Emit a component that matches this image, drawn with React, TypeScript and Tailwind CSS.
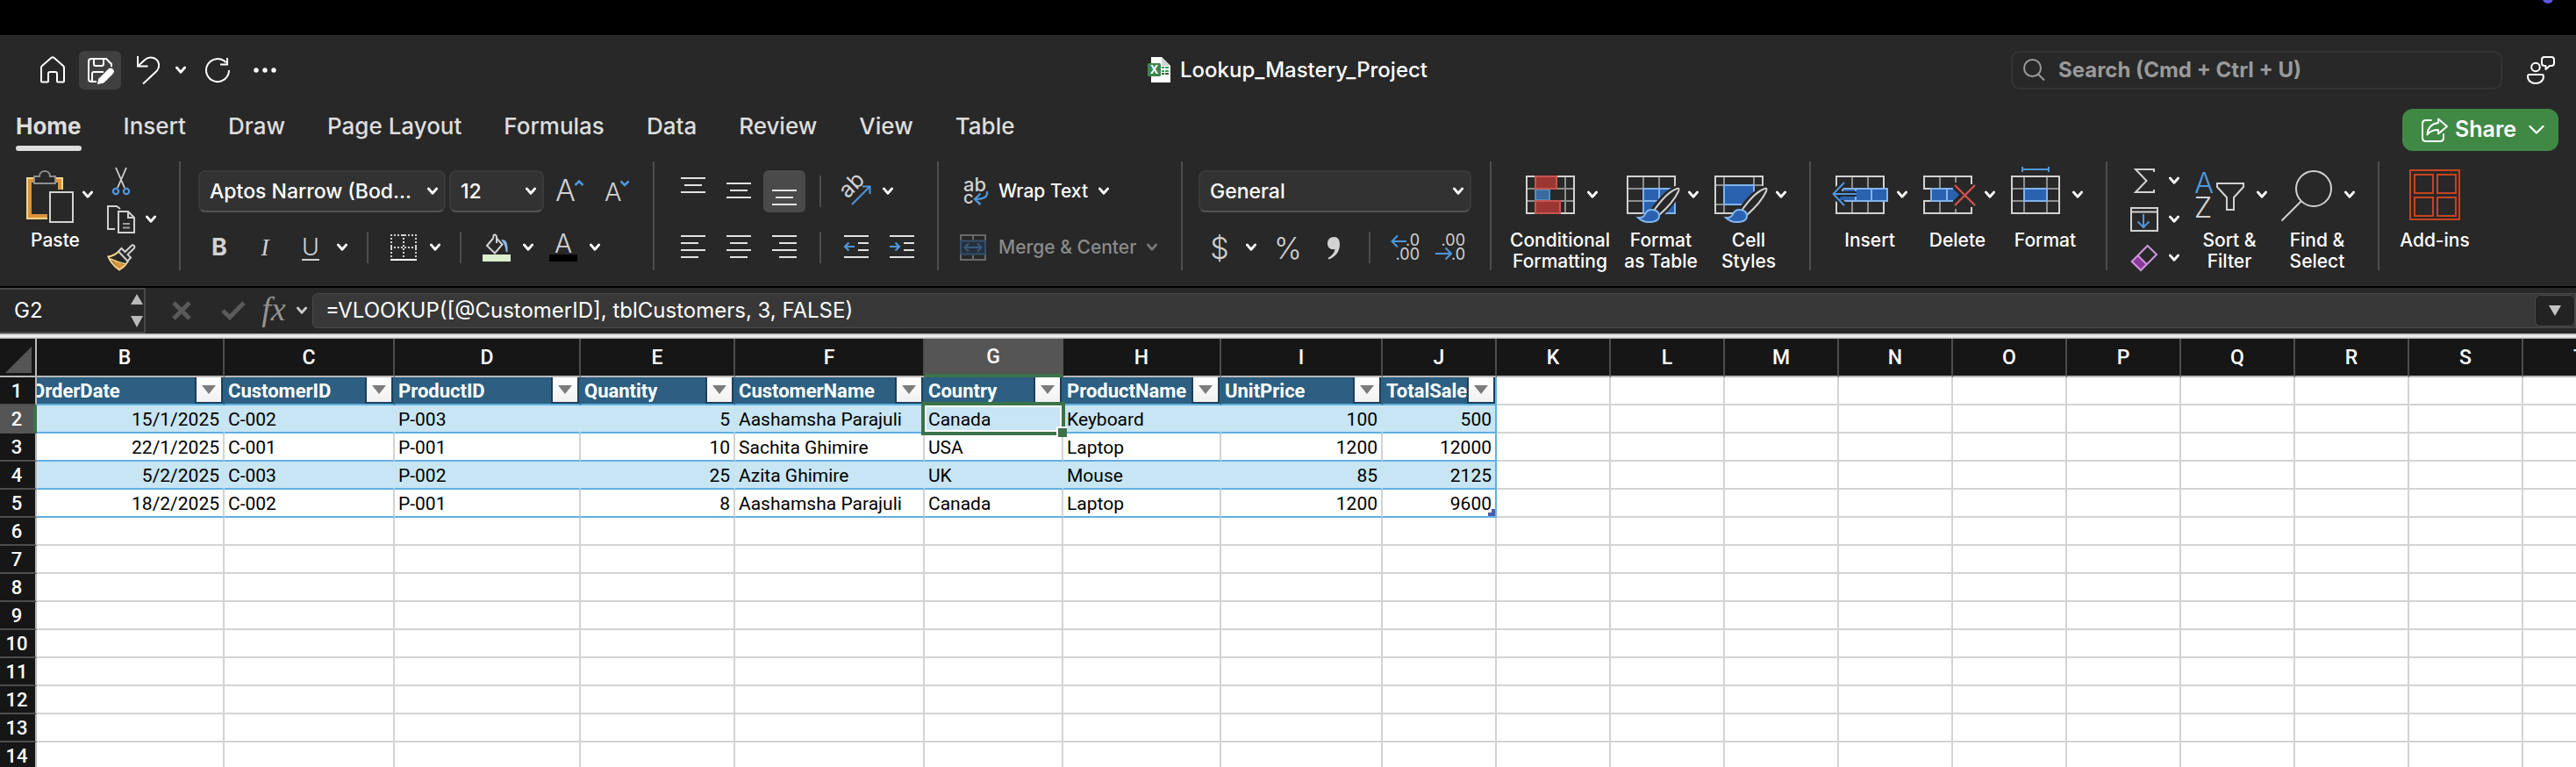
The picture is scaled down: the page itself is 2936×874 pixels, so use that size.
import type { ReactNode } from "react";

const UI = "font-['Inter',sans-serif]";
const CELL = "font-['Roboto',sans-serif]";
const LIGHT = "#d2d2d2";
const MID = "#8e8e8e";
const BLUE = "#4f97dc";
const FILL = "#2a62b0";
const EDGE = "#82b4ec";
const BG = "#282828";

/* ---------- small building blocks ---------- */

function Icon({ size = 32, children }: { size?: number; children: ReactNode }) {
  return (
    <svg
      width={size}
      height={size}
      viewBox={`0 0 ${size} ${size}`}
      fill="none"
      stroke={LIGHT}
      strokeWidth="2"
      className="block shrink-0 overflow-visible"
      aria-hidden="true"
    >
      {children}
    </svg>
  );
}

function Chevron({ className = "text-white" }: { className?: string }) {
  return (
    <svg width="12" height="10" viewBox="0 0 12 10" fill="none" className={`block shrink-0 ${className}`} aria-hidden="true">
      <path d="M1.4 2l4.6 5.2L10.6 2" stroke="currentColor" strokeWidth="2.8" strokeLinecap="round" strokeLinejoin="round" />
    </svg>
  );
}

function Divider() {
  return <div className="h-[124px] w-0.5 shrink-0 bg-[#4d4d4d]" />;
}

function MiniDivider({ className = "" }: { className?: string }) {
  return <div className={`h-9 w-0.5 shrink-0 bg-[#4d4d4d] ${className}`} />;
}

function Tool({ label, className = "", children }: { label: string; className?: string; children: ReactNode }) {
  return (
    <button type="button" aria-label={label} className={`flex shrink-0 items-center justify-center ${className}`}>
      {children}
    </button>
  );
}

function BigTool({
  lines,
  icon,
  className = "w-[86px]",
  menu = true,
}: {
  lines: string[];
  icon: ReactNode;
  className?: string;
  menu?: boolean;
}) {
  return (
    <button type="button" className={`flex shrink-0 flex-col items-center gap-2 pt-1.5 ${className}`}>
      <span className="flex items-center gap-2.5">
        {icon}
        {menu && <Chevron />}
      </span>
      <span className="flex flex-col items-center text-[21px] leading-6 font-medium whitespace-nowrap text-white">
        {lines.map((l) => (
          <span key={l}>{l}</span>
        ))}
      </span>
    </button>
  );
}

function Picker({ label, value, className }: { label: string; value: string; className: string }) {
  return (
    <div className={`relative h-12 ${className}`}>
      <select
        aria-label={label}
        defaultValue={value}
        className="h-full w-full appearance-none rounded-lg border-2 border-[#3a3a3a] border-b-[#555555] bg-[#323232] pl-[11px] text-[23px] font-medium text-white"
      >
        <option>{value}</option>
      </select>
      <span className="pointer-events-none absolute inset-y-0 right-[9px] flex items-center">
        <Chevron />
      </span>
    </div>
  );
}

/* ---------- icons ---------- */

const PasteIcon = (
  <Icon size={64}>
    <path d="M34 56H14V16H48V26" stroke="#dc933c" strokeWidth="4" />
    <path d="M34 59H11V13H51V26" stroke="#f5d58a" />
    <path d="M19 11H25C25 3 37 3 37 11H43V19H19Z" fill={BG} stroke={MID} />
    <path d="M37 29H63V63H37Z" fill={BG} />
  </Icon>
);

const CutIcon = (
  <Icon>
    <path d="M10 1L20 24M22 1L12 24" strokeWidth="1.8" />
    <circle cx="10" cy="28" r="3.1" stroke={BLUE} strokeWidth="2.2" />
    <circle cx="22" cy="28" r="3.1" stroke={BLUE} strokeWidth="2.2" />
  </Icon>
);

const CopyIcon = (
  <Icon>
    <path d="M9 27H1V1H11L15 4" />
    <path d="M13 7H24L31 14V31H13Z" />
    <path d="M24 7V14H31" />
    <path d="M18 21H26M18 25.5H26" stroke="#a0a0a0" />
  </Icon>
);

const PainterIcon = (
  <Icon>
    <path d="M5 18.5L22 24.5L14 29Z" fill="#dc933c" stroke="none" />
    <path d="M13.500 8.500Q8 13.500 1.500 14.500Q5 23 14 29.500Q20 26 24 19.500" stroke="#f5d58a" />
    <path d="M4 17Q12 21 22 23" stroke="#f5d58a" strokeWidth="1.500" />
    <path d="M13 8.500L16.500 5L20.500 9L28 1.700A2.200 2.200 0 0 1 31 4.800L23.500 12L27 15.500L23.500 19.500Z" fill={BG} />
  </Icon>
);

function FontSizeIcon({ up }: { up: boolean }) {
  return (
    <Icon>
      <text x="1" y="27" fontSize={up ? 34 : 29} fontWeight="300" fill={LIGHT} stroke="none">
        A
      </text>
      <path d={up ? "M23.500 9L28 4.500L32.500 9" : "M19.500 4.500L24 9L28.500 4.500"} stroke={BLUE} strokeWidth="2.600" />
    </Icon>
  );
}

const BordersIcon = (
  <Icon>
    <path d="M1 2H31M1 16H31M2 1V28M16 1V28M30 1V28" strokeDasharray="2 2" />
    <path d="M1 30H31" stroke="#ffffff" />
  </Icon>
);

const FillIcon = (
  <Icon>
    <path d="M12.500 5L5 14L14 22.500L22.500 12.500L16 5.500V4.500C16 0 11 1 12.500 5" />
    <path d="M16 5V11" />
    <path d="M21 7C27 6.500 29 11 28.500 20C28.500 22 27 22 26.500 20C26 15 25 12 21 7Z" fill="#8ab8e8" stroke="none" />
    <path d="M0 24H32V32H0Z" fill="#dcefcf" stroke="none" />
  </Icon>
);

const FontColorIcon = (
  <Icon>
    <text x="16" y="22" fontSize="30" fontWeight="300" textAnchor="middle" fill={LIGHT} stroke="none">
      A
    </text>
    <path d="M0 24H32V32H0Z" fill="#000000" stroke="none" />
  </Icon>
);

function Lines({ d }: { d: string }) {
  return (
    <Icon>
      <path d={d} stroke="#e2e2e2" />
    </Icon>
  );
}

const OrientIcon = (
  <Icon>
    <text x="6" y="25" fontSize="25" fill={LIGHT} stroke="none" transform="rotate(-45 6 25)">
      ab
    </text>
    <path d="M11 31L31 11M23 10.500H31.500V19" stroke={BLUE} />
  </Icon>
);

const WrapIcon = (
  <Icon>
    <text x="4" y="16" fontSize="22" fill={LIGHT} stroke="none">
      ab
    </text>
    <text x="4" y="30" fontSize="20" fill={LIGHT} stroke="none">
      c
    </text>
    <path d="M31 16C32 22 28 25 17 25M23.500 18.500L17 25L23.500 31" stroke={BLUE} strokeWidth="2.400" />
  </Icon>
);

const MergeIcon = (
  <Icon>
    <path d="M1 8V2H29V8M15 2V7M1 24V30H29V24M15 25V30" stroke="#6a6a6a" />
    <path d="M1 8.500H29V23.500H1Z" stroke="#33506f" fill="#26303b" />
    <path d="M6 16H24M10 11.500L5.500 16L10 20.500M20 11.500L24.500 16L20 20.500" stroke="#38597c" />
  </Icon>
);

const CommaIcon = (
  <Icon>
    <path
      d="M16.500 4C20.500 4 23 7 23 12C23 20 19 26 10.500 29.500L9.500 28C14 25.500 17 22 17.500 18C12 19 9 15.500 9 11.500C9 7 12 4 16.500 4Z"
      fill={LIGHT}
      stroke="none"
    />
  </Icon>
);

function DecimalIcon({ more }: { more: boolean }) {
  return (
    <Icon>
      <text x="32" y="14" fontSize="18" textAnchor="end" fill={LIGHT} stroke="none">
        {more ? ".0" : ".00"}
      </text>
      <text x="32" y="30" fontSize="18" textAnchor="end" fill={LIGHT} stroke="none">
        {more ? ".00" : ".0"}
      </text>
      <path d={more ? "M17 9H.5M7 2.500L.5 9L7 15.500" : "M-2 23H16M9.500 16.500L16 23L9.500 29.500"} stroke={BLUE} />
    </Icon>
  );
}

const ConditionalIcon = (
  <Icon size={64}>
    <path d="M5 25H59M5 39H59M15 11V53M49 11V53" stroke={MID} />
    <path d="M5 11H59V53H5Z" />
    <path d="M32 26.500H47V37.500H32Z" fill={BG} stroke="none" />
    <path d="M15 26H31V38H15Z" fill="#3a6aa0" stroke="#4f8fc0" />
    <path d="M15 11H39V25H15ZM15 39H43V53H15Z" fill="#9c3632" stroke="#c8544f" />
  </Icon>
);

function Brush() {
  return (
    <>
      <path d="M35 49Q49 30 60 25.500Q65 23 63 28Q57 41 41 55Z" fill={BG} stroke={BG} strokeWidth="7" />
      <path d="M35 50Q49 30 60 25.500Q65 23 63 28Q57 41 41 55Z" fill={BG} />
      <path
        d="M41 56C41 62 34 63 29 63C24 63 20 61 17 58C23 58.500 24 56 26 52.500C29 47 41 48 41 56Z"
        fill={FILL}
        stroke={EDGE}
      />
    </>
  );
}

const FormatTableIcon = (
  <Icon size={64}>
    <path d="M5 25H59M5 39H24M23 11V53M41 11V25" stroke={MID} />
    <path d="M59 26V11H5V53H24" />
    <path d="M23 25H59V53H23Z" fill={FILL} stroke={EDGE} />
    <path d="M23 39H59M41 25V53" stroke={EDGE} />
    <Brush />
  </Icon>
);

const CellStylesIcon = (
  <Icon size={64}>
    <path d="M5 21H59M5 43H15M15 11V53M49 11V21" stroke={MID} />
    <path d="M59 22V11H5V53H30" />
    <path d="M15 21H49V43H15Z" fill={FILL} stroke={EDGE} />
    <Brush />
  </Icon>
);

const InsertIcon = (
  <Icon size={64}>
    <path d="M23 11V53M41 11V53" stroke={MID} />
    <path d="M5 11H59V53H5Z" />
    <path d="M12 25H63V39H12Z" fill={FILL} stroke={EDGE} />
    <path d="M27 25V39M45 25V39" stroke={EDGE} />
    <path d="M14 18L1.500 31L14 44" stroke={BG} strokeWidth="7" />
    <path d="M14 26H26V38H8Z" fill={FILL} stroke="none" />
    <path d="M28 31H8" stroke={BG} strokeWidth="6" />
    <path d="M28 31H2M14 18L1.500 31L14 44" stroke={BLUE} />
  </Icon>
);

const DeleteIcon = (
  <Icon size={64}>
    <path d="M23 11V25M23 39V53M41 11V18M41 48V53" stroke={MID} />
    <path d="M13 25H5V11H59V20M13 39H5V53H59V46" />
    <path d="M13 25H38L45 32L38 39H13Z" fill={FILL} stroke="none" />
    <path d="M38 25H13V39H38M31 25V39" stroke={EDGE} />
    <path d="M40 21L63 44M63 21L40 44" stroke="#d9534f" strokeWidth="2.200" />
  </Icon>
);

const FormatIcon = (
  <Icon size={64}>
    <path d="M5 25H59M5 39H59M19 11V53M45 11V53" stroke={MID} />
    <path d="M5 11H59V53H5Z" />
    <path d="M19 25H45V39H19Z" fill={FILL} stroke={EDGE} />
    <path d="M17 0V6M47 0V6M17 3H47" stroke={BLUE} />
  </Icon>
);

const SumIcon = (
  <Icon>
    <path d="M27 6V3H6L18.500 16L6 29H27V26" />
  </Icon>
);

const FillDownIcon = (
  <Icon>
    <path d="M1 3H31V29H1ZM1 7.500H31" />
    <path d="M15 10V24.500M8.500 18.500L15 25L21.500 18.500" stroke={BLUE} />
  </Icon>
);

const ClearIcon = (
  <Icon>
    <path d="M8.500 13L18.500 24L12 30L1.500 20Z" fill="#8b3a9e" stroke="none" />
    <path d="M19.700 2L30 12L12 30L1.700 20ZM8.500 13L19 23.500" stroke="#cf96db" />
  </Icon>
);

const SortIcon = (
  <Icon size={64}>
    <text x="14" y="30" fontSize="33" fontWeight="300" textAnchor="middle" fill={BLUE} stroke="none">
      A
    </text>
    <text x="13" y="58" fontSize="33" fontWeight="300" textAnchor="middle" fill={LIGHT} stroke="none">
      Z
    </text>
    <path d="M29 19H59V23L48 35V49H40V35L29 23Z" />
  </Icon>
);

const FindIcon = (
  <Icon size={64}>
    <circle cx="39" cy="25" r="20" />
    <path d="M24.500 39.500L2.500 61.500" />
  </Icon>
);

const AddInsIcon = (
  <Icon size={64}>
    <path d="M4 4H60V60H4ZM9 9H30V30H9ZM35 9H56V30H35ZM9 35H30V56H9ZM35 35H56V56H35Z" stroke="#c6431f" />
  </Icon>
);

const HomeIcon = (
  <Icon>
    <path
      d="M4 29.500Q3 29.500 3 28.500V13Q3 12 4 11L14.500 1.800Q16 .8 17.500 1.800L28 11Q29 12 29 13V28.500Q29 29.500 28 29.500H22Q21 29.500 21 28.500V20Q21 18 19 18H13Q11 18 11 20V28.500Q11 29.500 10 29.500Z"
      stroke="#ffffff"
    />
  </Icon>
);

const SaveIcon = (
  <Icon>
    <g stroke="#ffffff">
      <path d="M12 29H6Q3 29 3 26V6Q3 3 6 3H23L29 9V12" />
      <path d="M9 3V9Q9 11 11 11H18Q20 11 20 9V3M7 29V20Q7 18 9 18H20" />
      <path d="M19 26.500L28 17.500" strokeWidth="7.500" strokeLinecap="round" />
      <path d="M15 25L13.500 31.500L20 30Z" fill="#ffffff" strokeWidth="1" />
    </g>
  </Icon>
);

const UndoIcon = (
  <Icon>
    <path d="M3 0V11.500H14.500M3.500 11L11 4.200C17 -1 26 2 27 9C27.500 13 26 16 23 18.500L9 31.500" stroke="#ffffff" />
  </Icon>
);

const RedoIcon = (
  <Icon>
    <path d="M29 16A13 13 0 1 1 25.500 7.200M27 2V9.500H19" stroke="#ffffff" />
  </Icon>
);

const MoreIcon = (
  <Icon>
    <g fill="#ffffff" stroke="none">
      <circle cx="6" cy="16" r="2.700" />
      <circle cx="16" cy="16" r="2.700" />
      <circle cx="26" cy="16" r="2.700" />
    </g>
  </Icon>
);

const WorkbookIcon = (
  <Icon>
    <g stroke="none">
      <path d="M7 1H19L29 11V30H7Z" fill="#ffffff" />
      <path d="M19 1L29 11H19Z" fill="#d5d5d5" />
      <path d="M19 12H22V14H19ZM23 12H27V14H23ZM19 16H22V18H19ZM23 16H27V18H23Z" fill="#3f9c5c" />
      <path d="M19 19H22V21H19ZM23 19H27V21H23Z" fill="#2b5f3b" />
      <rect x="3" y="8" width="15" height="15" rx="1.500" fill="#3d8550" />
      <text x="10.500" y="20" fontSize="13" fontWeight="700" textAnchor="middle" fill="#ffffff">
        X
      </text>
    </g>
  </Icon>
);

const PersonIcon = (
  <Icon>
    <g stroke="#ffffff">
      <circle cx="10" cy="12.500" r="4.800" />
      <path d="M3 21H17Q19 21 19 23C19 28 15 31 10 31C5 31 1 28 1 23Q1 21 3 21Z" />
      <path d="M20 1H28Q31 1 31 4V8Q31 11 28 11H26L21.500 15V11H20Q17 11 17 8V4Q17 1 20 1Z" strokeLinejoin="round" />
    </g>
  </Icon>
);

const ShareIcon = (
  <Icon>
    <g stroke="#ffffff" strokeLinejoin="round" strokeLinecap="round">
      <path d="M13 5H7Q3 5 3 9V25Q3 29 7 29H23Q27 29 27 25V21" />
      <path d="M21 3.500L31 12L21 20.500V16C15 16 11 18 8.500 21.500C9 13 14 9 21 8Z" />
    </g>
  </Icon>
);

/* ---------- window chrome ---------- */

function TitleBar() {
  return (
    <header className="grid h-20 grid-cols-[1fr_auto_1fr] items-center">
      <div className="flex items-center pl-11">
        <Tool label="Home">{HomeIcon}</Tool>
        <Tool label="Save" className="mr-4 ml-3.5 h-11 w-12 rounded-md bg-[#404040]">
          {SaveIcon}
        </Tool>
        <div className="flex items-center gap-3.5">
          <Tool label="Undo">{UndoIcon}</Tool>
          <Tool label="Undo history">
            <Chevron />
          </Tool>
        </div>
        <div className="flex items-center gap-[22px] pl-5">
          <Tool label="Redo">{RedoIcon}</Tool>
          <Tool label="More commands">{MoreIcon}</Tool>
        </div>
      </div>
      <div className="flex items-center gap-2 pr-1">
        {WorkbookIcon}
        <h1 className="text-2xl font-medium text-white">Lookup_Mastery_Project</h1>
      </div>
      <div className="flex items-center justify-end gap-7 pr-6">
        <label className="flex h-11 w-[560px] items-center gap-3.5 rounded-[10px] border-2 border-[#343434] px-2.5">
          <svg width="28" height="28" viewBox="0 0 28 28" fill="none" stroke="#9a9a9a" strokeWidth="2" aria-hidden="true">
            <circle cx="12.500" cy="11.500" r="9.500" />
            <path d="M19 18.500L26 25.500" />
          </svg>
          <input
            aria-label="Search"
            placeholder="Search (Cmd + Ctrl + U)"
            className="min-w-0 flex-1 bg-transparent text-2xl font-bold text-white outline-none placeholder:text-[#9a9a9a]"
          />
        </label>
        <Tool label="Comments">{PersonIcon}</Tool>
      </div>
    </header>
  );
}

const TABS = ["Home", "Insert", "Draw", "Page Layout", "Formulas", "Data", "Review", "View", "Table"];

function TabBar() {
  return (
    <nav className="flex items-start justify-between pr-5 pl-[18px]">
      <div className="flex gap-12">
        {TABS.map((tab) => {
          const active = tab === "Home";
          return (
            <button
              key={tab}
              type="button"
              className={`flex flex-col gap-1.5 pt-2 text-[26px] leading-8 text-[#dedede] ${active ? "font-bold" : "font-medium"}`}
            >
              <span>{tab}</span>
              {active && <span className="h-1.5 w-full rounded-full bg-[#dedede]" />}
            </button>
          );
        })}
      </div>
      <div className="pt-1">
        <button
          type="button"
          className="flex h-12 w-[178px] items-center gap-2 rounded-xl bg-[#3f8945] pl-5 text-[25px] font-semibold text-white"
        >
          {ShareIcon}
          <span>Share</span>
          <svg width="18" height="12" viewBox="0 0 18 12" fill="none" className="ml-1.5" aria-hidden="true">
            <path d="M1.500 2L9 9.500L16.500 2" stroke="#ffffff" strokeWidth="2.200" strokeLinecap="round" strokeLinejoin="round" />
          </svg>
        </button>
      </div>
    </nav>
  );
}

function Ribbon() {
  return (
    <div className="flex items-start pt-3 pb-4">
      <section aria-label="Clipboard" className="flex w-[204px] gap-4 pl-5">
        <BigTool lines={["Paste"]} icon={PasteIcon} />
        <div className="flex flex-col gap-3 pt-1.5">
          <Tool label="Cut" className="w-8">
            {CutIcon}
          </Tool>
          <Tool label="Copy" className="gap-3">
            {CopyIcon}
            <Chevron />
          </Tool>
          <Tool label="Format Painter" className="w-8">
            {PainterIcon}
          </Tool>
        </div>
      </section>
      <Divider />

      <section aria-label="Font" className="flex w-[538px] flex-col gap-4 pt-2.5 pl-5">
        <div className="flex h-12 items-center">
          <Picker label="Font name" value="Aptos Narrow (Bod..." className="w-[282px]" />
          <Picker label="Font size" value="12" className="ml-1 w-[108px]" />
          <div className="flex gap-6 pl-3">
            <Tool label="Increase font size">
              <FontSizeIcon up />
            </Tool>
            <Tool label="Decrease font size">
              <FontSizeIcon up={false} />
            </Tool>
          </div>
        </div>
        <div className="flex h-12 items-center pl-2">
          <div className="flex items-center gap-5 text-[27px] text-[#d2d2d2]">
            <Tool label="Bold" className="w-8 font-bold">
              B
            </Tool>
            <Tool label="Italic" className="w-8 font-['Liberation_Serif',serif] italic">
              I
            </Tool>
            <Tool label="Underline" className="w-8 font-light underline underline-offset-4">
              U
            </Tool>
          </div>
          <Tool label="Underline style" className="ml-3.5">
            <Chevron />
          </Tool>
          <MiniDivider className="mr-6 ml-[22px]" />
          <Tool label="Borders" className="gap-3.5">
            {BordersIcon}
            <Chevron />
          </Tool>
          <MiniDivider className="mr-6 ml-[22px]" />
          <div className="flex gap-[18px]">
            <Tool label="Fill color" className="gap-3.5">
              {FillIcon}
              <Chevron />
            </Tool>
            <Tool label="Font color" className="gap-3.5">
              {FontColorIcon}
              <Chevron />
            </Tool>
          </div>
        </div>
      </section>
      <Divider />

      <section aria-label="Alignment" className="flex w-[322px] flex-col gap-4 pt-2.5 pl-5">
        <div className="flex h-12 items-center">
          <div className="flex gap-1">
            <Tool label="Top align" className="h-12 w-12">
              <Lines d="M2 1H30M6 9H26M2 17H30" />
            </Tool>
            <Tool label="Middle align" className="h-12 w-12">
              <Lines d="M2 7H30M6 15H26M2 23H30" />
            </Tool>
            <Tool label="Bottom align" className="h-12 w-12 rounded-md bg-[#4a4a4a]">
              <Lines d="M2 15H30M6 23H26M2 31H30" />
            </Tool>
          </div>
          <MiniDivider className="mr-6 ml-4" />
          <Tool label="Orientation" className="gap-3.5">
            {OrientIcon}
            <Chevron />
          </Tool>
        </div>
        <div className="flex h-12 items-center">
          <div className="flex gap-1">
            <Tool label="Align left" className="h-12 w-12">
              <Lines d="M2 3H30M2 11H22M2 19H30M2 27H22" />
            </Tool>
            <Tool label="Center" className="h-12 w-12">
              <Lines d="M2 3H30M6 11H26M2 19H30M6 27H26" />
            </Tool>
            <Tool label="Align right" className="h-12 w-12">
              <Lines d="M2 3H30M10 11H30M2 19H30M10 27H30" />
            </Tool>
          </div>
          <MiniDivider className="mr-6 ml-4" />
          <div className="flex gap-5">
            <Tool label="Decrease indent">
              <Icon>
                <path d="M2 3H30M18 11H30M18 19H30M2 27H30" stroke="#e2e2e2" />
                <path d="M14 15H3M7.500 10.500L3 15L7.500 19.500" stroke={BLUE} strokeWidth="2.200" />
              </Icon>
            </Tool>
            <Tool label="Increase indent">
              <Icon>
                <path d="M2 3H30M18 11H30M18 19H30M2 27H30" stroke="#e2e2e2" />
                <path d="M2 15H13M8.500 10.500L13 15L8.500 19.500" stroke={BLUE} strokeWidth="2.200" />
              </Icon>
            </Tool>
          </div>
        </div>
      </section>
      <Divider />

      <section aria-label="Wrapping" className="flex w-[276px] flex-col items-start gap-4 pt-2.5 pl-6 text-[21px] font-medium">
        <button type="button" className="flex h-12 items-center gap-3 whitespace-nowrap text-white">
          {WrapIcon}
          <span>Wrap Text</span>
          <Chevron />
        </button>
        <button type="button" className="flex h-12 items-center gap-3 whitespace-nowrap text-[#8b8b8b]">
          {MergeIcon}
          <span>Merge &amp; Center</span>
          <Chevron className="text-[#777777]" />
        </button>
      </section>
      <Divider />

      <section aria-label="Number" className="flex w-[350px] flex-col gap-4 pt-2.5 pl-[18px]">
        <Picker label="Number format" value="General" className="w-[311px]" />
        <div className="flex h-12 items-center pl-2">
          <Tool label="Currency" className="gap-3.5 text-[34px] font-light text-[#d2d2d2]">
            <span className="w-8 text-center">$</span>
            <Chevron />
          </Tool>
          <Tool label="Percent" className="ml-[18px] w-9 text-[34px] font-light text-[#d2d2d2]">
            %
          </Tool>
          <Tool label="Comma style" className="ml-[18px]">
            {CommaIcon}
          </Tool>
          <MiniDivider className="mx-6" />
          <div className="flex gap-5">
            <Tool label="Increase decimal">
              <DecimalIcon more />
            </Tool>
            <Tool label="Decrease decimal">
              <DecimalIcon more={false} />
            </Tool>
          </div>
        </div>
      </section>
      <Divider />

      <section aria-label="Styles" className="flex w-[362px] gap-4 pl-[22px]">
        <BigTool lines={["Conditional", "Formatting"]} icon={ConditionalIcon} className="w-28" />
        <div className="flex gap-3.5">
          <BigTool lines={["Format", "as Table"]} icon={FormatTableIcon} />
          <BigTool lines={["Cell", "Styles"]} icon={CellStylesIcon} />
        </div>
      </section>
      <Divider />

      <section aria-label="Cells" className="flex w-[336px] gap-3.5 pl-6">
        <BigTool lines={["Insert"]} icon={InsertIcon} />
        <BigTool lines={["Delete"]} icon={DeleteIcon} />
        <BigTool lines={["Format"]} icon={FormatIcon} />
      </section>
      <Divider />

      <section aria-label="Editing" className="flex w-[308px] gap-3.5 pl-[26px]">
        <div className="flex flex-col gap-3 pt-1.5">
          <Tool label="AutoSum" className="gap-3">
            {SumIcon}
            <Chevron />
          </Tool>
          <Tool label="Fill" className="gap-3">
            {FillDownIcon}
            <Chevron />
          </Tool>
          <Tool label="Clear" className="gap-3">
            {ClearIcon}
            <Chevron />
          </Tool>
        </div>
        <BigTool lines={["Sort &", "Filter"]} icon={SortIcon} />
        <BigTool lines={["Find &", "Select"]} icon={FindIcon} />
      </section>
      <Divider />

      <section aria-label="Add-ins" className="flex pl-5">
        <BigTool lines={["Add-ins"]} icon={AddInsIcon} menu={false} />
      </section>
    </div>
  );
}

function FormulaBar() {
  return (
    <div className="flex h-[54px] items-stretch border-t-2 border-black">
      <div className="flex w-[166px] items-center justify-between border-y-2 border-r-2 border-[#474747] pr-px pl-4">
        <input
          aria-label="Name box"
          defaultValue="G2"
          className="w-24 min-w-0 bg-transparent text-[24px] leading-8 text-white outline-none"
        />
        <svg width="14" height="38" viewBox="0 0 14 38" fill="#b9b9b9" aria-hidden="true">
          <path d="M7 0L14 12H0ZM0 25H14L7 38Z" />
        </svg>
      </div>
      <div className="flex flex-1 items-center">
        <Tool label="Cancel" className="ml-[30px]">
          <svg width="22" height="22" viewBox="0 0 22 22" stroke="#5a5a5a" strokeWidth="5" aria-hidden="true">
            <path d="M2 2L20 20M20 2L2 20" />
          </svg>
        </Tool>
        <Tool label="Enter" className="ml-[34px]">
          <svg width="28" height="22" viewBox="0 0 28 22" fill="none" stroke="#5a5a5a" strokeWidth="5" aria-hidden="true">
            <path d="M2 11L10 18.500L26 2" />
          </svg>
        </Tool>
        <Tool
          label="Insert function"
          className="ml-3 w-10 pb-1 font-['Liberation_Serif',serif] text-[38px] leading-9 text-[#949494] italic"
        >
          fx
        </Tool>
        <Tool label="Function list" className="ml-1 w-4">
          <Chevron className="text-[#c8c8c8]" />
        </Tool>
        <div className="ml-1 flex h-10 flex-1 items-center rounded-l-md border border-[#4a4a4a] bg-[#383838] pl-3.5">
          <input
            aria-label="Formula"
            defaultValue="=VLOOKUP([@CustomerID], tblCustomers, 3, FALSE)"
            className="min-w-0 flex-1 bg-transparent text-[24px] leading-8 text-white outline-none"
          />
          <button
            type="button"
            aria-label="Expand formula bar"
            className="flex h-9 w-[46px] items-center justify-center rounded-md border border-[#4a4a4a] bg-[#232323]"
          >
            <svg width="14" height="12" viewBox="0 0 14 12" fill="#c4c4c4" aria-hidden="true">
              <path d="M0 0H14L7 12Z" />
            </svg>
          </button>
        </div>
      </div>
    </div>
  );
}

/* ---------- sheet ---------- */

const ROW_HEAD = 42;
const COLS: [string, number][] = [
  ["B", 214],
  ["C", 194],
  ["D", 212],
  ["E", 176],
  ["F", 216],
  ["G", 158],
  ["H", 180],
  ["I", 184],
  ["J", 130],
  ..."KLMNOPQRST".split("").map((c): [string, number] => [c, 130]),
];
const TOTAL = COLS.reduce((sum, [, w]) => sum + w, ROW_HEAD);
const HEADERS = ["OrderDate", "CustomerID", "ProductID", "Quantity", "CustomerName", "Country", "ProductName", "UnitPrice", "TotalSale"];
const DATA = [
  ["15/1/2025", "C-002", "P-003", "5", "Aashamsha Parajuli", "Canada", "Keyboard", "100", "500"],
  ["22/1/2025", "C-001", "P-001", "10", "Sachita Ghimire", "USA", "Laptop", "1200", "12000"],
  ["5/2/2025", "C-003", "P-002", "25", "Azita Ghimire", "UK", "Mouse", "85", "2125"],
  ["18/2/2025", "C-002", "P-001", "8", "Aashamsha Parajuli", "Canada", "Laptop", "1200", "9600"],
];
const RIGHT = new Set([0, 3, 7, 8]);
const LAST = HEADERS.length - 1;

function RowHeader({ n }: { n: number }) {
  const selected = n === 2;
  return (
    <th
      scope="row"
      className={`h-8 border-b-2 p-0 pt-0.5 text-center text-[22px] leading-7 font-medium text-white ${
        selected ? "border-r-4 border-r-[#3a7349] border-b-[#555555] bg-[#555555]" : "border-r-2 border-r-[#b8b8b8] border-b-[#4d4d4d] bg-[#161616] pr-0.5"
      }`}
    >
      {n}
    </th>
  );
}

function FilterHeader({ index, title }: { index: number; title: string }) {
  return (
    <th
      scope="col"
      className={`h-8 overflow-hidden border-r-2 border-b-2 border-b-[#60b0e2] bg-[#2c5f81] p-0 ${
        index === LAST ? "border-r-[#60b0e2]" : "border-r-[#2c5f81]"
      }`}
    >
      <div className="flex h-[30px] items-start justify-between">
        <span className={`pt-0.5 text-[22px] leading-7 font-bold text-white ${index === 0 ? "-ml-1.5" : "pl-1"}`}>{title}</span>
        <button
          type="button"
          aria-label={`Filter ${title}`}
          className="flex h-[30px] w-8 shrink-0 items-center justify-center border-x-2 border-b-2 border-[#1d3f5a] bg-linear-to-b from-white to-[#f1f1f1]"
        >
          <svg width="16" height="10" viewBox="0 0 16 10" fill="#7c7c7c" aria-hidden="true">
            <path d="M0 0H16L8 10Z" />
          </svg>
        </button>
      </div>
    </th>
  );
}

function DataCell({ row, col, value }: { row: number; col: number; value: string }) {
  const banded = row % 2 === 0;
  const selected = row === 0 && col === 5;
  const corner = row === DATA.length - 1 && col === LAST;
  const edge = col === LAST ? "border-r-[#60b0e2]" : banded ? "border-r-[#c8e5f3]" : "border-r-[#d3d3d3]";
  return (
    <td
      className={`relative h-8 border-r-2 border-b-2 border-b-[#60b0e2] px-1 pt-0.5 text-[21px] leading-7 whitespace-nowrap text-black ${edge} ${
        banded ? "bg-[#c8e5f3]" : "bg-white"
      } ${RIGHT.has(col) ? "text-right" : "text-left"}`}
    >
      {value}
      {selected && (
        <span className="pointer-events-none absolute -inset-1 z-10 border-4 border-[#3a7349] shadow-[inset_0_0_0_2px_#ffffff]">
          <span className="absolute -right-1.5 -bottom-1.5 size-3 border-t-2 border-l-2 border-white bg-[#3a7349]" />
        </span>
      )}
      {corner && (
        <svg width="8" height="8" viewBox="0 0 8 8" fill="#4f5dab" className="absolute right-0 bottom-0" aria-hidden="true">
          <path d="M4 0H8V8H0V4H4Z" />
        </svg>
      )}
    </td>
  );
}

function Blanks({ from }: { from: number }) {
  return (
    <>
      {COLS.slice(from).map(([c]) => (
        <td key={c} className="h-8 border-r-2 border-b-2 border-[#d3d3d3] bg-white p-0" />
      ))}
    </>
  );
}

function Sheet() {
  return (
    <main className={`min-h-0 flex-1 overflow-hidden bg-white ${CELL}`}>
      <table className="table-fixed border-separate border-spacing-0" style={{ width: TOTAL }}>
        <colgroup>
          <col style={{ width: ROW_HEAD }} />
          {COLS.map(([c, w]) => (
            <col key={c} style={{ width: w }} />
          ))}
        </colgroup>
        <thead>
          <tr>
            <td className="h-11 border-r-2 border-b-2 border-[#b8b8b8] bg-[#161616] p-0">
              <svg width="30" height="30" viewBox="0 0 30 30" fill="#555555" className="mt-1.5 ml-1.5" aria-hidden="true">
                <path d="M30 0V30H0Z" />
              </svg>
            </td>
            {COLS.map(([c], i) => (
              <th
                key={c}
                scope="col"
                className={`h-11 pt-0.5 text-[23px] leading-9 font-medium text-white ${i === 0 ? "pr-3" : "p-0"} ${
                  c === "G"
                    ? "border-r-2 border-b-4 border-r-[#555555] border-b-[#3a7349] bg-[#555555]"
                    : "border-r-2 border-b-2 border-r-[#4d4d4d] border-b-[#b8b8b8] bg-[#161616]"
                }`}
              >
                {c}
              </th>
            ))}
          </tr>
        </thead>
        <tbody>
          <tr>
            <RowHeader n={1} />
            {HEADERS.map((h, i) => (
              <FilterHeader key={h} index={i} title={h} />
            ))}
            <Blanks from={HEADERS.length} />
          </tr>
          {DATA.map((cells, r) => (
            <tr key={r}>
              <RowHeader n={r + 2} />
              {cells.map((v, c) => (
                <DataCell key={c} row={r} col={c} value={v} />
              ))}
              <Blanks from={HEADERS.length} />
            </tr>
          ))}
          {Array.from({ length: 9 }, (_, i) => (
            <tr key={i}>
              <RowHeader n={i + 6} />
              <Blanks from={0} />
            </tr>
          ))}
        </tbody>
      </table>
    </main>
  );
}

export default function App() {
  return (
    <div className={`flex h-screen flex-col overflow-hidden bg-[#282828] ${UI}`}>
      <div className="flex h-10 shrink-0 items-start justify-end overflow-hidden bg-black pr-[26px]">
        <span className="-mt-2 size-3 rounded-full bg-[#5b57e0]" />
      </div>
      <div className="shrink-0">
        <TitleBar />
        <TabBar />
        <Ribbon />
        <FormulaBar />
        <div className="h-1.5 bg-linear-to-b from-[#a8a8a8] via-white to-[#a8a8a8]" />
      </div>
      <Sheet />
    </div>
  );
}
